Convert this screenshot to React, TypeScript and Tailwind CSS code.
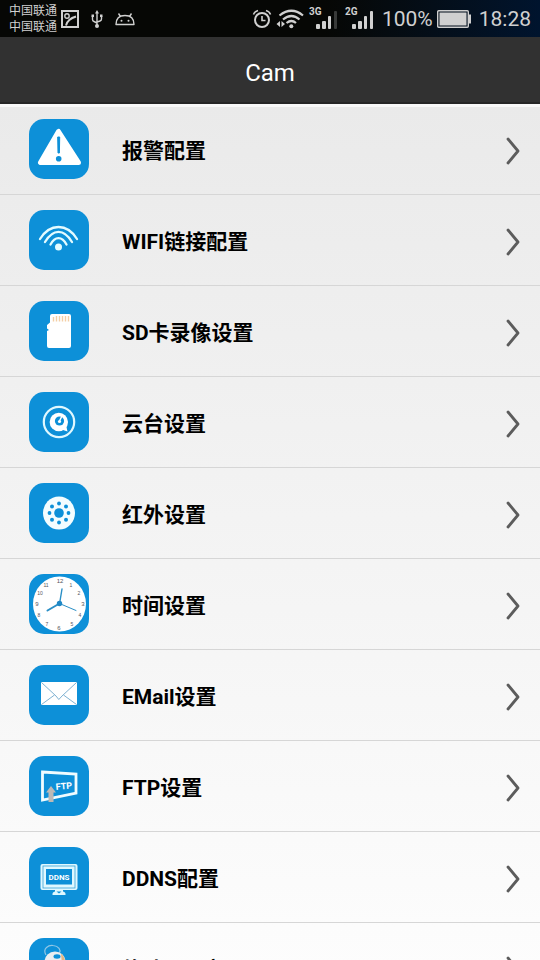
import type { ReactNode } from "react";

const BLUE = "#0d90d8";

function Tile({ children }: { children: ReactNode }) {
  return (
    <svg viewBox="0 0 60 60" className="size-[60px] shrink-0" aria-hidden="true">
      <rect width="60" height="60" rx="15" fill={BLUE} />
      {children}
    </svg>
  );
}

function AlarmTile() {
  return (
    <Tile>
      <path d="M29.500 12.500 L11.500 43.500 H49.500 Z" fill="#fff" stroke="#fff" strokeWidth="5" strokeLinejoin="round" />
      <path d="M28.700 18 h2 l-0.300 16 h-1.400z" fill={BLUE} stroke={BLUE} strokeWidth="1" strokeLinejoin="round" />
      <circle cx="29.700" cy="39.700" r="2.800" fill={BLUE} />
    </Tile>
  );
}

function WifiTile() {
  return (
    <Tile>
      <g fill="none" stroke="#e4fbff" strokeWidth="2.300" strokeLinecap="round">
        <path d="M11 29 C21 13 38 13 48 29" />
        <path d="M16 32 C24 18.500 35 18.500 43 32" />
        <path d="M21.500 34.500 C26 26 33 26 37.500 34.500" />
      </g>
      <circle cx="29.500" cy="37" r="3.500" fill="#e4fbff" />
    </Tile>
  );
}

function CardTile() {
  return (
    <Tile>
      <path d="M23 13 H40 Q42 13 42 15 V45 Q42 47 40 47 H20 Q18 47 18 45 V30 L20 29 L18 27.500 V24 L21 21.500 V15 Q21 13 23 13Z" fill="#fff" />
      <path d="M24.500 20.500V16M27.500 20.500V15M30.500 20.500V15M33.500 20.500V15M36.500 20.500V15M39.500 20.500V15" stroke="#f3cfa6" strokeWidth="1.400" />
    </Tile>
  );
}

function PanTile() {
  return (
    <Tile>
      <circle cx="30" cy="30" r="15.200" fill="none" stroke="#dff8ff" strokeWidth="2.200" />
      <circle cx="29.800" cy="30" r="9.200" fill="#fff" />
      <path d="M31 37 L38.500 39.500 L37 33Z" fill="#fff" />
      <circle cx="30.500" cy="29" r="4.600" fill={BLUE} />
      <path d="M30.500 29 L33 24" stroke="#fff" strokeWidth="1.500" />
      <circle cx="30.500" cy="29.500" r="1.600" fill="#fff" />
    </Tile>
  );
}

function InfraredTile() {
  return (
    <Tile>
      <ellipse cx="30" cy="30" rx="16" ry="16.500" fill="#f3fdff" />
      <circle cx="30" cy="30" r="4.800" fill={BLUE} />
      <g fill={BLUE}>
        <circle cx="30" cy="20.500" r="1.900" />
        <circle cx="37" cy="23.500" r="2" />
        <circle cx="39.500" cy="30" r="1.900" />
        <circle cx="37" cy="36.800" r="2" />
        <circle cx="30" cy="39.500" r="1.900" />
        <circle cx="23" cy="36.800" r="2" />
        <circle cx="20.500" cy="30" r="1.900" />
        <circle cx="23" cy="23.500" r="2" />
      </g>
    </Tile>
  );
}

const NUMERALS = [
  { n: "12", x: 31, y: 9, s: 6 },
  { n: "1", x: 42, y: 13, s: 5 },
  { n: "2", x: 50, y: 21, s: 5 },
  { n: "3", x: 54, y: 32, s: 6 },
  { n: "4", x: 51, y: 43, s: 5 },
  { n: "5", x: 43, y: 52, s: 5 },
  { n: "6", x: 30, y: 56, s: 6 },
  { n: "7", x: 18, y: 52, s: 5 },
  { n: "8", x: 10, y: 43, s: 5 },
  { n: "9", x: 8, y: 32, s: 6 },
  { n: "10", x: 11, y: 21, s: 5 },
  { n: "11", x: 17, y: 13, s: 5 },
];

function ClockTile() {
  return (
    <Tile>
      <ellipse cx="30.500" cy="30" rx="26.500" ry="27.500" fill="#fff" />
      <g fill="#55555c" textAnchor="middle" fontFamily="Liberation Sans, sans-serif">
        {NUMERALS.map((m) => (
          <text key={m.n} x={m.x} y={m.y} fontSize={m.s}>{m.n}</text>
        ))}
      </g>
      <g stroke="#2a8fc6" strokeLinecap="round">
        <path d="M30.500 30 L33 15" strokeWidth="1.400" />
        <path d="M30.500 29.500 L18.500 36.500" strokeWidth="2" />
        <path d="M30.500 29.500 L47 36.500" strokeWidth="1" />
      </g>
      <circle cx="30.500" cy="29.500" r="2.700" fill="#1f88c6" />
    </Tile>
  );
}

function MailTile() {
  return (
    <Tile>
      <rect x="12" y="17" width="36" height="23" rx="1" fill="#fff" />
      <path d="M12.500 17.500 L27 31 L29.800 34.500 L33 31 L47.500 17.500 M12.500 39.500 L25.500 30 M47.500 39.500 L34.500 30" fill="none" stroke="#7fb2d2" strokeWidth="1" />
    </Tile>
  );
}

function FtpTile() {
  return (
    <Tile>
      <path d="M13.500 16 L47 18 V37 L13.500 44 Z" fill="none" stroke="#f0fcff" strokeWidth="2.800" />
      <text x="27" y="34" fontSize="9" fontWeight="bold" fill="#fff" fontFamily="Roboto, sans-serif" transform="rotate(-5 27 34)">FTP</text>
      <path d="M22 30 L27 36.500 H24.500 V46 H19.500 V36.500 H17Z" fill="#bdb9b6" />
    </Tile>
  );
}

function DdnsTile() {
  return (
    <Tile>
      <rect x="11.500" y="17" width="37" height="26" rx="2" fill="#dff8ff" />
      <rect x="14" y="19" width="32" height="22" fill="none" stroke="#3aa2d6" strokeWidth="0.800" />
      <rect x="17" y="22" width="26" height="15.500" fill={BLUE} />
      <text x="30" y="32.500" fontSize="8" fontWeight="bold" fill="#fff" textAnchor="middle" fontFamily="Roboto, sans-serif">DDNS</text>
      <path d="M26 43 H34 V44.500 Q37 45 36.500 48 H23.500 Q23 45 26 44.500Z" fill="#dff8ff" />
      <path d="M27.500 44.500 H32.500 L30 46.500Z" fill={BLUE} />
    </Tile>
  );
}

function PasswordTile() {
  return (
    <Tile>
      <path d="M17 17 C13 10 20 7 24 7.500 C30 8 32 12 30.500 15" fill="none" stroke="#8fc6e6" strokeWidth="1.200" />
      <circle cx="26" cy="24" r="10.500" fill="#e9edf0" />
      <path d="M32 15.500 Q37 19 36 27 L33 27Z" fill="#e3b682" />
      <ellipse cx="28" cy="18.500" rx="3.500" ry="2.200" fill={BLUE} />
    </Tile>
  );
}

const ITEMS: { label: string; icon: ReactNode }[] = [
  { label: "报警配置", icon: <AlarmTile /> },
  { label: "WIFI链接配置", icon: <WifiTile /> },
  { label: "SD卡录像设置", icon: <CardTile /> },
  { label: "云台设置", icon: <PanTile /> },
  { label: "红外设置", icon: <InfraredTile /> },
  { label: "时间设置", icon: <ClockTile /> },
  { label: "EMail设置", icon: <MailTile /> },
  { label: "FTP设置", icon: <FtpTile /> },
  { label: "DDNS配置", icon: <DdnsTile /> },
  { label: "修改P2P密码", icon: <PasswordTile /> },
];

function NoticeIcons() {
  return (
    <div className="flex items-center gap-3 text-[#d0d0d0]" aria-hidden="true">
      <svg viewBox="0 0 18 18" className="size-[18px]" fill="none" stroke="currentColor" strokeWidth="2">
        <rect x="1" y="1" width="16" height="16" />
        <circle cx="6" cy="6" r="2.200" strokeWidth="1.400" />
        <path d="M5 15.500 Q6.500 9 15 6.500" />
      </svg>
      <svg viewBox="0 0 12 18" className="h-[18px] w-3" fill="none" stroke="currentColor" strokeWidth="1.400">
        <path d="M6 2V16M1.500 6V9.500Q1.500 11 3 11.500L6 13M10.500 6V9Q10.500 10.500 9 11L6 12" />
        <path d="M6 0L8 3.500H4Z M0.500 4.500h2.500v2.500h-2.500z M9 4.500h2.500v2.500h-2.500z" fill="currentColor" stroke="none" />
        <circle cx="6" cy="16" r="2" fill="currentColor" stroke="none" />
      </svg>
      <svg viewBox="0 0 20 14" className="h-3.5 w-5" fill="none" stroke="currentColor" strokeWidth="1.400">
        <path d="M1 12.500Q1 3.500 10 3.500T19 12.500ZM5.500 4.500L3.500 1.500M14.500 4.500L16.500 1.500" strokeLinejoin="round" />
        <circle cx="6.500" cy="8.800" r="1" fill="currentColor" stroke="none" />
        <circle cx="13.500" cy="8.800" r="1" fill="currentColor" stroke="none" />
      </svg>
    </div>
  );
}

function Signal({ network, faded }: { network: string; faded: boolean }) {
  return (
    <svg viewBox="0 0 30 24" className="h-6 w-[30px]" role="img" aria-label={network}>
      <text x="1" y="8" fontSize="10" fontWeight="bold" fill="#d0d0d0" fontFamily="Roboto, sans-serif">{network}</text>
      <g fill="#d0d0d0">
        <rect x="8" y="17" width="4" height="5" rx="1" />
        <rect x="14" y="14" width="4" height="8" rx="1" />
        <rect x="20" y="9" width="3" height="13" rx="1" />
        <rect x="26" y="4" width="3" height="18" rx="1" opacity={faded ? 0.25 : 1} />
      </g>
    </svg>
  );
}

function StatusBar() {
  return (
    <div className="flex h-[37px] items-center justify-between bg-linear-to-r from-[#060705] from-60% to-[#00142e] pr-[9px] pl-[9px] text-[#d0d0d0]">
      <div className="flex items-center gap-1">
        <div className="text-[12px] leading-4">
          <p>中国联通</p>
          <p>中国联通</p>
        </div>
        <NoticeIcons />
      </div>
      <div className="flex items-center">
        <svg viewBox="0 0 20 20" className="size-5" fill="none" stroke="currentColor" strokeWidth="2" aria-hidden="true">
          <circle cx="10" cy="11" r="7" />
          <path d="M10 7V11.500H13.500M1.500 5.500Q2.500 2.500 6 1.500M18.500 5.500Q17.500 2.500 14 1.500" strokeWidth="1.600" />
        </svg>
        <svg viewBox="0 0 28 20" className="ml-1 h-5 w-7" fill="none" stroke="currentColor" strokeWidth="2.200" aria-hidden="true">
          <path d="M3.500 6.500Q15.500 -3 27 6.500M7 10.500Q15.500 3.500 23.500 10.500M10.500 14Q15.500 10 20 14" />
          <circle cx="15.300" cy="17.300" r="2" fill="currentColor" stroke="none" />
          <path d="M4 12V18L0.500 15ZM5.500 12V18L9 15Z" fill="currentColor" stroke="none" />
        </svg>
        <div className="ml-1 flex gap-1.5">
          <Signal network="3G" faded />
          <Signal network="2G" faded={false} />
        </div>
        <span className="ml-2 text-[21px] leading-6">100%</span>
        <svg viewBox="0 0 34 18" className="ml-1 h-[18px] w-[34px]" aria-hidden="true">
          <rect x="0.700" y="0.700" width="30.600" height="16.600" rx="1" fill="none" stroke="#d0d0d0" strokeWidth="1.400" />
          <rect x="2.500" y="2.500" width="27" height="13" fill="#d0d0d0" />
          <rect x="31.500" y="4.500" width="2.500" height="9" fill="#d0d0d0" />
        </svg>
        <span className="ml-2 text-[21px] leading-6">18:28</span>
      </div>
    </div>
  );
}

export default function App() {
  return (
    <div className="h-screen overflow-hidden bg-white font-[Roboto,'Noto_Sans_CJK_SC',sans-serif]">
      <StatusBar />
      <header className="flex h-[67px] items-center justify-center border-b-2 border-[#262626] bg-[#313131]">
        <h1 className="pt-1.5 text-[24px] leading-8 text-white">Cam</h1>
      </header>
      <main className="h-full bg-linear-to-b from-[#eaeaea] to-white shadow-[inset_0_3px_0_#f8f8f8]">
        <ul>
          {ITEMS.map((item) => (
            <li key={item.label} className="border-b border-[#d6d6d6]">
              <button type="button" className="flex h-[90px] w-full items-center pr-5 pl-[29px] text-left">
                {item.icon}
                <span className="ml-[33px] flex-1 pt-1 text-[21px] leading-7 font-bold text-black">{item.label}</span>
                <svg viewBox="0 0 14 28" className="mt-1 h-7 w-3.5" fill="none" stroke="#5c5c5c" strokeWidth="2.800" strokeLinecap="round" strokeLinejoin="round" aria-hidden="true">
                  <path d="M2 2L12 14L2 26" />
                </svg>
              </button>
            </li>
          ))}
        </ul>
      </main>
    </div>
  );
}
